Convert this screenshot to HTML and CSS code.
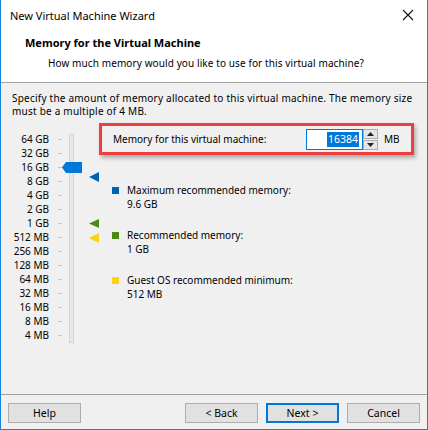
FILE: index.html
```html
<!DOCTYPE html>
<html>
<head>
<meta charset="utf-8">
<link rel="stylesheet" href="styles.css">
</head>
<body>
<div class="window">
  <div class="titlebar">
    <span class="title">New Virtual Machine Wizard</span>
    <svg class="close" width="12" height="12" viewBox="0 0 12 12"><path d="M1 1 L11 11 M11 1 L1 11" stroke="#111" stroke-width="1.1" fill="none"/></svg>
  </div>
  <div class="header">
    <div class="h-title">Memory for the Virtual Machine</div>
    <div class="h-sub">How much memory would you like to use for this virtual machine?</div>
  </div>
  <div class="content">
    <p class="desc">Specify the amount of memory allocated to this virtual machine. The memory size<br>must be a multiple of 4 MB.</p>
    <div class="memory">
      <div class="slider">
        <ul class="scale">
          <li><span>64 GB</span><i></i></li>
          <li><span>32 GB</span><i></i></li>
          <li><span>16 GB</span><i></i></li>
          <li><span>8 GB</span><i></i></li>
          <li><span>4 GB</span><i></i></li>
          <li><span>2 GB</span><i></i></li>
          <li><span>1 GB</span><i></i></li>
          <li><span>512 MB</span><i></i></li>
          <li><span>256 MB</span><i></i></li>
          <li><span>128 MB</span><i></i></li>
          <li><span>64 MB</span><i></i></li>
          <li><span>32 MB</span><i></i></li>
          <li><span>16 MB</span><i></i></li>
          <li><span>8 MB</span><i></i></li>
          <li><span>4 MB</span><i></i></li>
        </ul>
        <div class="track"></div>
        <svg class="thumb" width="20" height="11" viewBox="0 0 20 11"><path d="M0 5.5 L4 0 H20 V11 H4 Z" fill="#0078d7"/></svg>
        <svg class="marker m-blue" width="10" height="10" viewBox="0 0 10 10"><path d="M0 5 L10 0 V10 Z" fill="#0063b1"/></svg>
        <svg class="marker m-green" width="10" height="9" viewBox="0 0 10 9"><path d="M0 4.5 L10 0 V9 Z" fill="#4a8c13"/></svg>
        <svg class="marker m-yellow" width="10" height="10" viewBox="0 0 10 10"><path d="M0 5 L10 0 V10 Z" fill="#fcd116"/></svg>
      </div>
      <div class="right">
        <div class="mem-box">
          <span class="mem-label">Memory for this virtual machine:</span>
          <div class="num-input"><span class="sel">16384</span></div>
          <div class="spin">
            <div class="spin-btn"><svg width="7" height="4" viewBox="0 0 7 4"><path d="M0 4 L3.5 0 L7 4 Z" fill="#222"/></svg></div>
            <div class="spin-btn"><svg width="7" height="4" viewBox="0 0 7 4"><path d="M0 0 L3.5 4 L7 0 Z" fill="#222"/></svg></div>
          </div>
          <span class="unit">MB</span>
        </div>
        <ul class="legend">
          <li><i class="sq sq-blue"></i><div>Maximum recommended memory:<br>9.6 GB</div></li>
          <li><i class="sq sq-green"></i><div>Recommended memory:<br>1 GB</div></li>
          <li><i class="sq sq-yellow"></i><div>Guest OS recommended minimum:<br>512 MB</div></li>
        </ul>
      </div>
    </div>
  </div>
  <div class="footer">
    <button class="btn">Help</button>
    <div class="spacer"></div>
    <button class="btn">&lt; Back</button>
    <button class="btn btn-default">Next &gt;</button>
    <button class="btn">Cancel</button>
  </div>
</div>
</body>
</html>
```

FILE: styles.css
```css
* { box-sizing: border-box; }
html, body { margin: 0; padding: 0; }
body {
  font-family: "Noto Sans", "Open Sans", sans-serif;
  font-size: 10px;
  color: #000;
  background: #fff;
}
.window {
  width: 428px;
  height: 430px;
  border: 1px solid #1883d7;
  border-top: none;
  display: flex;
  flex-direction: column;
  background: #f0f0f0;
}
.titlebar {
  height: 30px;
  background: #fff;
  display: flex;
  align-items: center;
  padding-left: 9px;
  padding-right: 13px;
  justify-content: space-between;
  font-size: 11px;
}
.title { color: #000; }
.close { display: block; }
.header {
  height: 53px;
  background: #fff;
  border-bottom: 1px solid #a0a0a0;
  padding-top: 6px;
}
.h-title {
  font-weight: bold;
  font-size: 11px;
  line-height: 14px;
  padding-left: 24px;
}
.h-sub {
  line-height: 14px;
  padding-left: 47px;
  margin-top: 6px;
  letter-spacing: 0.1px;
}
.content {
  height: 311px;
  padding: 9px 0 0 11px;
}
.desc {
  margin: 0;
  line-height: 13px;
  letter-spacing: 0.22px;
  white-space: nowrap;
}
.memory {
  display: flex;
  margin-top: 5px;
}
.slider {
  position: relative;
  width: 87px;
  height: 220px;
}
.scale {
  list-style: none;
  margin: 0;
  padding: 9px 0 0 0;
}
.scale li {
  height: 14px;
  line-height: 14px;
  display: flex;
  align-items: center;
}
.scale span {
  width: 37px;
  text-align: right;
  white-space: nowrap;
}
.scale i {
  width: 4px;
  height: 1px;
  background: #c4c4c4;
  margin-left: 9px;
}
.track {
  position: absolute;
  left: 57px;
  top: 11px;
  width: 5px;
  height: 209px;
  background: #e7e7e7;
  border: 1px solid #d6d6d6;
}
.thumb { position: absolute; left: 50px; top: 39px; }
.marker { position: absolute; left: 77px; }
.m-blue { top: 49px; }
.m-green { top: 96px; }
.m-yellow { top: 110px; }
.right { width: 315px; }
.mem-box {
  height: 32px;
  border: 3px solid #f03d3d;
  box-shadow: 2px 3px 4px rgba(0,0,0,0.28);
  display: flex;
  align-items: center;
  padding: 0 11px 0 11px;
}
.mem-label { flex: 1; }
.num-input {
  width: 57px;
  height: 21px;
  border: 1px solid #0078d7;
  background: #fff;
  display: flex;
  align-items: center;
  justify-content: flex-end;
  padding-right: 3px;
}
.sel {
  background: #0078d7;
  color: #fff;
  line-height: 15px;
  padding: 0 1px;
  font-size: 10.5px;
}
.spin {
  width: 15px;
  height: 21px;
  display: flex;
  flex-direction: column;
  gap: 1px;
}
.spin-btn {
  flex: 1;
  background: #e5e5e5;
  border: 1px solid #adadad;
  display: flex;
  align-items: center;
  justify-content: center;
}
.spin-btn svg { display: block; }
.unit { margin-left: 6px; width: 16px; }
.legend {
  list-style: none;
  margin: 28px 0 0 13px;
  padding: 0;
  display: flex;
  flex-direction: column;
  gap: 17px;
}
.legend li {
  display: flex;
  line-height: 14px;
}
.sq {
  width: 7px;
  height: 7px;
  margin-top: 3.5px;
  margin-right: 8px;
  flex: none;
}
.sq-blue { background: #0063b1; }
.sq-green { background: #4a8c13; }
.sq-yellow { background: #fcd116; }
.footer {
  height: 35px;
  border-top: 1px solid #a0a0a0;
  display: flex;
  align-items: flex-start;
  padding: 8px 7px 0 7px;
  gap: 8px;
}
.spacer { flex: 1; }
.btn {
  width: 73px;
  height: 20px;
  background: #e1e1e1;
  border: 1px solid #adadad;
  font-family: inherit;
  font-size: 10.5px;
  color: #000;
  padding: 0;
  margin: 0;
}
.btn-default {
  border: 2px solid #0078d7;
}
```
